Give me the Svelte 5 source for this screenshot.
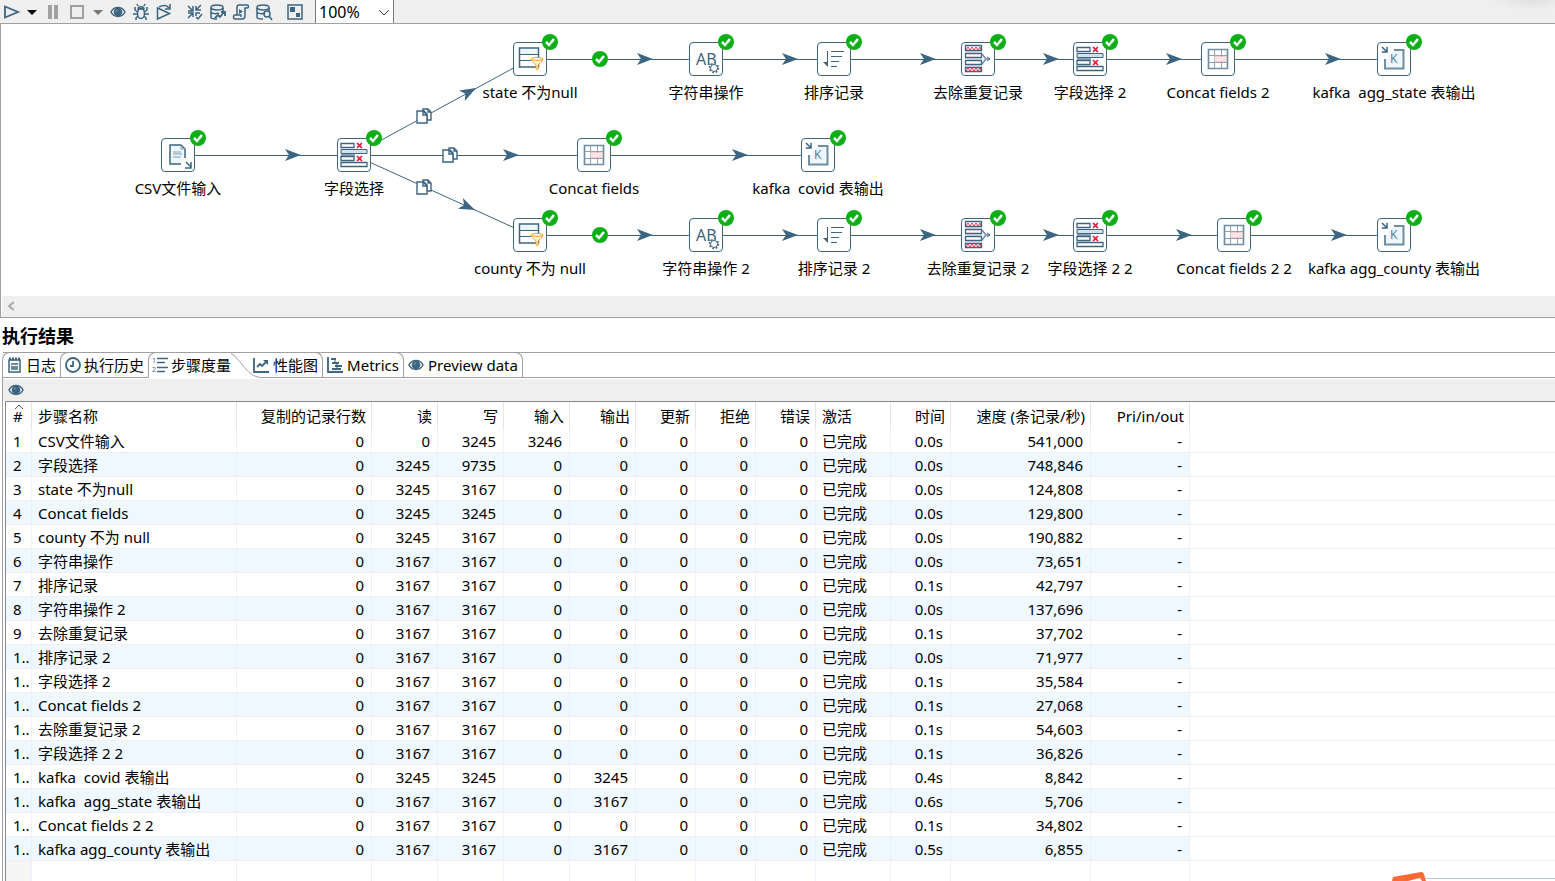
<script>
  let zoom = $state("100%");
  let activeTab = $state("metrics");

  // node positions are the centre of the 34px box on the canvas
  const nodes = [
    { x: 530, y: 35, icon: "filter", label: "state 不为null" },
    { x: 706, y: 35, icon: "string", label: "字符串操作" },
    { x: 834, y: 35, icon: "sort", label: "排序记录" },
    { x: 978, y: 35, icon: "unique", label: "去除重复记录" },
    { x: 1090, y: 35, icon: "fields", label: "字段选择 2" },
    { x: 1218, y: 35, icon: "concat", label: "Concat fields 2" },
    { x: 1394, y: 35, icon: "kafka", label: "kafka  agg_state 表输出" },
    { x: 178, y: 131, icon: "csv", label: "CSV文件输入" },
    { x: 354, y: 131, icon: "fields", label: "字段选择" },
    { x: 594, y: 131, icon: "concat", label: "Concat fields" },
    { x: 818, y: 131, icon: "kafka", label: "kafka  covid 表输出" },
    { x: 530, y: 211, icon: "filter", label: "county 不为 null" },
    { x: 706, y: 211, icon: "string", label: "字符串操作 2" },
    { x: 834, y: 211, icon: "sort", label: "排序记录 2" },
    { x: 978, y: 211, icon: "unique", label: "去除重复记录 2" },
    { x: 1090, y: 211, icon: "fields", label: "字段选择 2 2" },
    { x: 1234, y: 211, icon: "concat", label: "Concat fields 2 2" },
    { x: 1394, y: 211, icon: "kafka", label: "kafka agg_county 表输出" },
  ];

  // from, to, tip of the arrow head
  const hops = [
    [0, 1, 653, 35], [1, 2, 798, 35], [2, 3, 936, 35],
    [3, 4, 1059, 35], [4, 5, 1182, 35], [5, 6, 1341, 35],
    [7, 8, 301, 131], [8, 9, 519, 131], [9, 10, 748, 131],
    [8, 0, 476, 64], [8, 11, 475, 186],
    [11, 12, 653, 211], [12, 13, 798, 211], [13, 14, 936, 211],
    [14, 15, 1059, 211], [15, 16, 1192, 211], [16, 17, 1347, 211],
  ];
  const copies = [[416, 84], [442, 123], [416, 155]];
  const checks = [[592, 27], [592, 203]];

  function angle(a, b) {
    return (Math.atan2(nodes[b].y - nodes[a].y, nodes[b].x - nodes[a].x) * 180) / Math.PI;
  }

  const tabs = [
    { id: "log", icon: "log", label: "日志", side: "left" },
    { id: "history", icon: "clock", label: "执行历史", side: "left" },
    { id: "metrics", icon: "steps", label: "步骤度量", side: "active" },
    { id: "perf", icon: "chart", label: "性能图", side: "right" },
    { id: "gantt", icon: "gantt", label: "Metrics", side: "right" },
    { id: "preview", icon: "eye", label: "Preview data", side: "right" },
  ];

  const toolGroups = [
    [["play", "Run"], ["caret", "Run options"], ["pause", "Pause"], ["stop", "Stop"], ["caretGrey", "Stop options"]],
    [["eye", "Preview"], ["bug", "Debug"], ["replay", "Replay"]],
    [["verify", "Verify"], ["impact", "Impact"], ["sql", "SQL"], ["explore", "Explore"]],
    [["panes", "Results"]],
  ];

  const columns = [
    { label: "#", width: 26 },
    { label: "步骤名称", width: 205 },
    { label: "复制的记录行数", width: 135, num: true },
    { label: "读", width: 66, num: true },
    { label: "写", width: 66, num: true },
    { label: "输入", width: 66, num: true },
    { label: "输出", width: 66, num: true },
    { label: "更新", width: 60, num: true },
    { label: "拒绝", width: 60, num: true },
    { label: "错误", width: 60, num: true },
    { label: "激活", width: 75 },
    { label: "时间", width: 60, num: true },
    { label: "速度 (条记录/秒)", width: 140, num: true },
    { label: "Pri/in/out", width: 99, num: true },
  ];

  // name, read, written, input, output, time, speed
  const steps = [
    ["CSV文件输入", 0, 3245, 3246, 0, "0.0s", "541,000"],
    ["字段选择", 3245, 9735, 0, 0, "0.0s", "748,846"],
    ["state 不为null", 3245, 3167, 0, 0, "0.0s", "124,808"],
    ["Concat fields", 3245, 3245, 0, 0, "0.0s", "129,800"],
    ["county 不为 null", 3245, 3167, 0, 0, "0.0s", "190,882"],
    ["字符串操作", 3167, 3167, 0, 0, "0.0s", "73,651"],
    ["排序记录", 3167, 3167, 0, 0, "0.1s", "42,797"],
    ["字符串操作 2", 3167, 3167, 0, 0, "0.0s", "137,696"],
    ["去除重复记录", 3167, 3167, 0, 0, "0.1s", "37,702"],
    ["排序记录 2", 3167, 3167, 0, 0, "0.0s", "71,977"],
    ["字段选择 2", 3167, 3167, 0, 0, "0.1s", "35,584"],
    ["Concat fields 2", 3167, 3167, 0, 0, "0.1s", "27,068"],
    ["去除重复记录 2", 3167, 3167, 0, 0, "0.1s", "54,603"],
    ["字段选择 2 2", 3167, 3167, 0, 0, "0.1s", "36,826"],
    ["kafka  covid 表输出", 3245, 3245, 0, 3245, "0.4s", "8,842"],
    ["kafka  agg_state 表输出", 3167, 3167, 0, 3167, "0.6s", "5,706"],
    ["Concat fields 2 2", 3167, 3167, 0, 0, "0.1s", "34,802"],
    ["kafka agg_county 表输出", 3167, 3167, 0, 3167, "0.5s", "6,855"],
  ];

  const rows = steps.map(([name, read, written, input, output, time, speed], i) => [
    i < 9 ? i + 1 : "1..", name, 0, read, written, input, output, 0, 0, 0, "已完成", time, speed, "-",
  ]);

  const db = '<path d="M13 7V4M1 4v9c0 1 2 2 5 2h1"/><ellipse cx="7" cy="3.500" rx="6" ry="2.500"/><path d="M1 8c1 2 5 2 8 1"/>';

  // 16x16, stroked with the theme blue
  const icons = {
    play: '<path d="M2 2.500v11L15 8z" stroke-width="1.800"/>',
    caret: '<path d="M3 6h10l-5 5z" fill="#000" stroke="none"/>',
    caretGrey: '<path d="M3 6h10l-5 5z" fill="#777" stroke="none"/>',
    pause: '<path d="M3 1h4v14H3zM9 1h4v14H9z" fill="#a0a0a0" stroke="none"/>',
    stop: '<path d="M2 2h12v12H2z" stroke="#a0a0a0" stroke-width="2"/>',
    eye: '<path d="M1 8c3-6 11-6 14 0-3 6-11 6-14 0z"/><circle cx="8" cy="8" r="4.300" fill="#3d6480" stroke="none"/><path d="M6 8a2 2 0 0 1 2-2" stroke="#7fa0b5" stroke-width="1"/>',
    bug: '<ellipse cx="8" cy="9.500" rx="3.500" ry="5"/><path d="M5 5c0-3 6-3 6 0zM5 2 4 0M11 2l1-2M4.500 8 2 6V3M11.500 8 14 6V3M4 10H0M12 10h4M5 12l-2 2v2M11 12l2 2v2"/>',
    replay: '<path d="M1.500 4v11l12-5.500zM3 3c4-2 8-2 10 1"/><path d="M14 0v5H9"/>',
    verify: '<path d="M1 2l5 5M6 2v5H1M14 1 9 6M9 2v4h5M1 14l5-5M6 13V9H1M9 12V9h4M9 13l2 2 4-5"/>',
    impact: db + '<path d="M5 14l3-3 2 2 4-5M11 8h4v4" stroke-width="1.800"/>',
    sql: '<path d="M4 11V3c0-1 1-2 2-2h8c2 0 2 3 0 3h-2v8c0 2-1 3-3 3H2c-2 0-2-4 0-4h6v2"/><path d="M6 5v5l4-2.500z" fill="#3d6480" stroke="none"/>',
    explore: db + '<circle cx="11" cy="10" r="3"/><path d="M13 12l3 4"/>',
    panes: '<path d="M1 1h14v14H1z"/><path d="M3 3h5v5H3zM9 9h4v4H9z" fill="#3d6480" stroke="none"/>',
    log: '<path d="M2 3h11v12H2zM4 7h7M4 10h7M4 12h7"/><path d="M2 2h11" stroke-width="3" stroke-dasharray="2 1"/>',
    clock: '<circle cx="8" cy="8" r="7" stroke-width="1.800"/><path d="M8 4v5H5" stroke-width="1.800"/>',
    steps: '<path d="M5 1.500h11M5 5.500h8M5 10.500h11M5 14.500h8"/><text x="0" y="6" font-size="7" fill="#3d6480" stroke="none">1</text><text x="0" y="15" font-size="7" fill="#3d6480" stroke="none">2</text>',
    chart: '<path d="M1 1v14h15" stroke-width="1.800"/><path d="M4 10l3-3 2 2 4-4" stroke-width="1.800"/><path d="M10 3h5v5z" fill="#3d6480" stroke="none"/>',
    gantt: '<path d="M1 0v15h15" stroke-width="1.800"/><path d="M4 2h5M5 6h7M8 9h7M5 12h9" stroke-width="2"/><path d="M8 2v4M10 6v6" stroke-width="1"/>',
    copies: '<path d="M7 3V1h5l3 3v8h-4V6L8 3z" fill="#fff"/><path d="M1 3h6l4 4v8H1z" fill="#fff"/><path d="M7 3v4h4M12 1v3h3"/>',
    check: '<circle cx="8" cy="8" r="8" fill="#0eaf16" stroke="none"/><path d="M4 8l3 3 5-6" stroke="#fff" stroke-width="2.500"/>',
  };

  // 34x34, drawn inside the node box
  const nodeIcons = {
    csv: '<path d="M24 20v-9l-4-4H9v19h11" fill="#eef7fd" stroke-width="1.500"/><path d="M20 7v4h4M12 14h8M12 16h9M12 19h8" stroke="#7f9bae" stroke-width="1"/><path d="M25 24l5 5M30 24v6h-6" stroke-width="1.500"/>',
    fields: '<path d="M4 17h14" stroke-width="3" stroke="#8ba3b5"/><path d="M4 11.500h26v4H4z" fill="#d5e1e9"/><path d="M4 5.500h13v4H4zM4 18.500h13v4H4zM4 24.500h26v4H4z" stroke-width="1.300"/><path d="M20 5l5 5M25 5l-5 5M20 18l5 5M25 18l-5 5" stroke="#e8112d" stroke-width="1.600"/>',
    filter: '<path d="M8 7h17v5H8z" fill="#eaf6fd" stroke="none"/><path d="M6.500 6h19v19h-19z" stroke-width="1.500"/><path d="M7 12.500h18M7 18.500h18"/><path d="M18 17c0-2 12-2 12 0 0 3-4 4-5 6v5l-2-1v-4c-1-2-5-3-5-6z" fill="#fff4df" stroke="#f7a428"/><path d="M18 17c2 2 10 2 12 0" stroke="#f7a428"/>',
    string: '<text x="7" y="23" font-size="16" fill="#3d6480" stroke="none">AB</text><circle cx="25" cy="26" r="5" fill="#fff" stroke="none"/><circle cx="25" cy="26" r="3.500"/><circle cx="25" cy="26" r="4.500" stroke-dasharray="1.700 1.800" stroke-width="1.500"/>',
    sort: '<path d="M10.500 9v15M14 9.500h13M14 14.500h11M14 19.500h8M14 24.500h6"/><path d="M6 20h5v5z" fill="#3d6480" stroke="none"/>',
    unique: '<path d="M4.500 3.500h16v5h-16zM4.500 11.500h16v4h-16zM4.500 18.500h16v4h-16zM4.500 25.500h16v4h-16z" stroke-width="1.300"/><path d="M4 10h17M4 24h17M4 17h17" stroke="#a9bbc8"/><path d="M5 8l2-3 2 3 2-3 2 3 2-3 2 3 2-3 1 3M5 29l2-3 2 3 2-3 2 3 2-3 2 3 2-3 1 3" stroke="#e8112d" stroke-width=".8"/><path d="M21 12l4 5h4M21 22l4-5" stroke="#6f8ea3" stroke-width="1.500"/><path d="M26 15l3 2-3 2"/>',
    concat: '<path d="M7.500 7.500h19v19h-19z" stroke="#6f8ea3" stroke-width="1.700"/><path d="M13.500 8v18M20.500 8v18M8 13.500h18M8 20.500h18" stroke="#8ba3b5"/><path d="M13.500 14.500h12v5h-12z" fill="#fde6e8" stroke="#f0a5ad" stroke-dasharray="1 1"/>',
    kafka: '<path d="M8 18v9h19V8h-9z" fill="#eef7fd" stroke="none"/><path d="M8 17v9.500h18.500V8H17" stroke="#6f8ea3" stroke-width="2"/><path d="M5 5l5 5M10 5v5H5" stroke-width="1.500"/><text x="13" y="21" font-size="12" fill="#5b7d95" stroke="none">K</text>',
  };
</script>

{#snippet icon(name)}
  <svg class="icon" viewBox="0 0 16 16" aria-hidden="true">{@html icons[name]}</svg>
{/snippet}

<div class="app">
  <header class="toolbar">
    {#each toolGroups as group, g}
      <div class="group" class:wide={g === 0}>
        {#each group as [name, title]}
          <button class="tool" class:narrow={name.startsWith("caret")} aria-label={title}>
            {@render icon(name)}
          </button>
        {/each}
      </div>
    {/each}
    <label class="zoom">
      <select bind:value={zoom} aria-label="Zoom">
        <option>50%</option>
        <option>100%</option>
        <option>200%</option>
      </select>
      <svg class="chevron" viewBox="0 0 10 6" aria-hidden="true"><path d="M0 0l5 5 5-5" /></svg>
    </label>
  </header>

  <section class="graph">
    <div class="canvas">
      <svg class="hops" aria-hidden="true">
        {#each hops as [a, b, tx, ty]}
          <line
            class:flat={nodes[a].y === nodes[b].y}
            x1={nodes[a].x} y1={nodes[a].y} x2={nodes[b].x} y2={nodes[b].y}
          />
          <path class="head" d="M0 0l-16-6 4 6-4 6z" transform="translate({tx} {ty}) rotate({angle(a, b)})" />
        {/each}
        {#each copies as [x, y]}
          <svg class="mark" {x} {y} width="16" height="16" viewBox="0 0 16 16">{@html icons.copies}</svg>
        {/each}
        {#each checks as [x, y]}
          <svg class="mark" {x} {y} width="16" height="16" viewBox="0 0 16 16">{@html icons.check}</svg>
        {/each}
      </svg>
      {#each nodes as node}
        <div class="node" style="left: {node.x}px; top: {node.y}px">
          <div class="box">
            <svg viewBox="0 0 34 34" aria-hidden="true">{@html nodeIcons[node.icon]}</svg>
            <span class="badge">{@render icon("check")}</span>
          </div>
          <span class="label">{node.label}</span>
        </div>
      {/each}
    </div>
    <div class="scrollbar">
      <button aria-label="Scroll left">
        <svg viewBox="0 0 6 10" aria-hidden="true"><path d="M6 1L1 5l5 4" /></svg>
      </button>
    </div>
  </section>

  <h2>执行结果</h2>

  <section class="results">
    <div class="tabs" role="tablist">
      {#each tabs as tab}
        <button
          class="tab {tab.side}"
          role="tab"
          aria-selected={activeTab === tab.id}
          onclick={() => (activeTab = tab.id)}
        >
          {@render icon(tab.icon)}
          {tab.label}
          {#if tab.side === "active"}
            <svg class="curve" viewBox="0 0 36 26" aria-hidden="true">
              <path class="fill" d="M0 0c14 0 16 25 36 25v1H0z" />
              <path d="M0 0.500c14 0 18 25 36 25" />
            </svg>
          {/if}
        </button>
      {/each}
    </div>
    <div class="subbar">
      <button class="tool" aria-label="Show selected">{@render icon("eye")}</button>
    </div>
    <div class="grid">
      <table>
        <colgroup>
          {#each columns as col}
            <col style="width: {col.width}px" />
          {/each}
          <col />
        </colgroup>
        <thead>
          <tr>
            {#each columns as col, c}
              <th class:num={col.num}>
                {#if c === 0}
                  <svg class="sorted" viewBox="0 0 8 5" aria-hidden="true"><path d="M0 5l4-4 4 4" /></svg>
                {/if}
                {col.label}
              </th>
            {/each}
            <th class="rest"></th>
          </tr>
        </thead>
        <tbody>
          {#each rows as row}
            <tr>
              {#each row as cell, c}
                <td class:num={columns[c].num}>{cell}</td>
              {/each}
              <td class="rest"></td>
            </tr>
          {/each}
          <tr class="blank">
            {#each columns as _}
              <td></td>
            {/each}
            <td class="rest"></td>
          </tr>
        </tbody>
      </table>
    </div>
  </section>

  <div class="float" aria-hidden="true">
    <svg viewBox="0 0 34 9"><path d="M0 9l1-4L29 0c3 0 3 2 5 9h-4l-2-3-12 3z" /></svg>
    <i></i>
  </div>
</div>

<style>
  :global(body) {
    margin: 0;
    background: #fff;
  }

  .app {
    position: relative;
    display: flex;
    flex-direction: column;
    height: 100vh;
    overflow: hidden;
    color: #000;
    font-family: "Noto Sans", "Noto Sans CJK SC", sans-serif;
    font-size: 15px;
    line-height: 20px;
  }

  button {
    padding: 0;
    border: 0;
    background: none;
    color: inherit;
    font: inherit;
  }

  svg {
    display: block;
    fill: none;
    stroke: #3d6480;
  }

  .icon {
    flex: none;
    width: 16px;
    height: 16px;
    overflow: visible;
    stroke-width: 1.5;
  }

  /* toolbar */
  .toolbar {
    display: flex;
    align-items: center;
    flex: none;
    height: 23px;
    padding-left: 3px;
    border-bottom: 1px solid #a0a0a0;
    background: radial-gradient(ellipse 40px 10px at calc(100% - 25px) 0, #e0e0e0, #efefef);
  }

  .group {
    display: flex;
    gap: 7px;
    margin-right: 15px;
  }

  .group.wide {
    gap: 8px;
    margin-right: 7px;
  }

  .tool.narrow {
    display: flex;
    justify-content: center;
    width: 10px;
  }

  .zoom {
    display: flex;
    position: relative;
    align-self: stretch;
    width: 77px;
    margin-left: -3px;
    border: solid #7a7a7a;
    border-width: 0 1px;
    background: #fff;
  }

  .zoom select {
    width: 100%;
    padding: 0 0 0 3px;
    border: 0;
    appearance: none;
    background: transparent;
    color: #000;
    font: inherit;
    font-size: 16px;
  }

  .chevron {
    position: absolute;
    right: 4px;
    top: 10px;
    width: 10px;
    height: 6px;
    stroke: #444;
    pointer-events: none;
  }

  /* transformation graph */
  .graph {
    flex: none;
    border: solid #a0a0a0;
    border-width: 0 0 1px 1px;
  }

  .canvas {
    position: relative;
    height: 272px;
    margin-left: -1px;
    overflow: hidden;
    border-left: 1px solid #a0a0a0;
  }

  .hops {
    width: 100%;
    height: 100%;
    margin-left: -1px;
  }

  .flat {
    shape-rendering: crispEdges;
  }

  .head {
    fill: #3d6480;
    stroke: none;
  }

  .mark {
    stroke-width: 1.4;
  }

  .node {
    display: flex;
    position: absolute;
    flex-direction: column;
    align-items: center;
    gap: 6px;
    width: 200px;
    margin: -17px 0 0 -101px;
  }

  .box {
    position: relative;
    box-sizing: border-box;
    width: 34px;
    height: 34px;
    border: 1px solid #3d6480;
    border-radius: 4px;
    background: #fff;
  }

  .box > svg {
    width: 34px;
    height: 34px;
    margin: -1px;
  }

  .badge {
    position: absolute;
    top: -9px;
    right: -12px;
  }

  .label {
    white-space: pre;
  }

  .scrollbar {
    height: 21px;
    margin-left: 1px;
    background: #efefef;
  }

  .scrollbar button {
    display: block;
    padding: 5px 6px;
  }

  .scrollbar svg {
    width: 6px;
    height: 10px;
    stroke: #aaa;
    stroke-width: 2;
  }

  h2 {
    flex: none;
    margin: 0;
    padding: 6px 2px 4px;
    font-size: 18px;
    line-height: 24px;
  }

  /* results */
  .results {
    display: flex;
    flex: 1;
    flex-direction: column;
    min-height: 0;
    margin-left: 2px;
    border: solid #a0a0a0;
    border-width: 1px 0 0 1px;
    border-top-left-radius: 8px;
  }

  .tabs {
    display: flex;
    position: relative;
    z-index: 0;
    flex: none;
    height: 24px;
    border-bottom: 1px solid #a0a0a0;
  }

  .tab {
    display: flex;
    align-items: center;
    gap: 3px;
    box-sizing: border-box;
    height: 25px;
    margin-top: -1px;
    padding: 0 4px;
    border: solid #a0a0a0;
    border-width: 1px 0 0;
    white-space: nowrap;
  }

  .tab.left + .tab {
    border-left-width: 1px;
    border-top-left-radius: 8px;
  }

  .tab.right {
    gap: 4px;
    border-right-width: 1px;
    border-top-right-radius: 8px;
  }

  .tab.active {
    position: relative;
    height: 26px;
    margin-right: 18px;
    padding: 0 0 1px 3px;
    background: #fff;
  }

  .curve {
    position: absolute;
    top: -1px;
    right: -31px;
    width: 36px;
    height: 26px;
    stroke: #a0a0a0;
    z-index: -1;
  }

  .curve .fill {
    fill: #fff;
    stroke: none;
  }

  .subbar {
    flex: none;
    height: 22px;
    margin-top: 1px;
    padding: 3px 5px 0;
    box-sizing: border-box;
    background: #efefef;
  }

  .subbar .tool {
    display: block;
  }

  .grid {
    display: flex;
    flex: 1;
    min-height: 0;
    margin-left: 2px;
    overflow: hidden;
    border: solid #828790;
    border-width: 1px 0 0 1px;
  }

  table {
    width: 100%;
    height: 100%;
    table-layout: fixed;
    border-spacing: 0;
  }

  th,
  td {
    box-sizing: border-box;
    height: 24px;
    padding: 1px 5px 0 6px;
    border-right: 1px solid #e9f1fa;
    border-bottom: 1px solid #efefef;
    line-height: 22px;
    text-align: left;
    white-space: pre;
    overflow: hidden;
  }

  th {
    position: relative;
    height: 27px;
    border-right-color: #e5e5e5;
    border-bottom: 0;
    font-weight: 400;
    white-space: nowrap;
  }

  td.num {
    padding-right: 7px;
  }

  .num {
    text-align: right;
  }

  th:first-child,
  td:first-child {
    padding-left: 7px;
    padding-right: 0;
  }

  tbody tr:nth-child(even) td:not(.rest) {
    background: #eff8ff;
  }

  .rest {
    border-right: 0;
  }

  .sorted {
    position: absolute;
    top: 2px;
    left: 9px;
    width: 8px;
    height: 5px;
    stroke: #555;
  }

  tbody .blank td {
    height: auto;
    border-bottom: 0;
  }

  tbody .blank td:first-child {
    background: #f5f5f5;
  }

  .float {
    display: flex;
    position: absolute;
    right: 0;
    bottom: 0;
    width: 163px;
  }

  .float svg {
    width: 34px;
    height: 9px;
    fill: #f96a35;
    stroke: none;
  }

  .float i {
    flex: 1;
    margin-top: 6px;
    border-top: 1px solid #b5c7e3;
    background: #fff;
  }
</style>
